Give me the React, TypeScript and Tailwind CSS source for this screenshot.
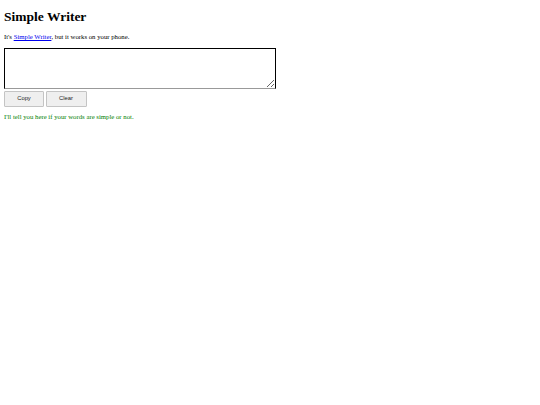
export default function App() {
  return (
    <div className="min-h-[405px] bg-white px-[4px] pt-[1px] font-['Liberation_Serif',serif] text-black">
      <h1 className="mt-[8px] mb-[8.5px] text-[13.5px] leading-[15.5px] font-bold">Simple Writer</h1>
      <p className="text-[6.75px] leading-[8px]">
        It's{" "}
        <a href="#" className="text-[#0000ee] underline">
          Simple Writer
        </a>
        , but it works on your phone.
      </p>
      <div className="mt-[7px] flex flex-col">
        <textarea className="h-[41px] w-[272px] resize border-[1px] border-t-black border-l-black border-r-black border-b-[#999] bg-white" />
        <div className="mt-[1.5px] flex gap-[1.5px]">
          <button className="h-[16px] w-[40px] rounded-[1px] border border-[#c4c4c4] bg-[#efefef] font-['Liberation_Sans',sans-serif] text-[5.8px] text-[#222]">
            Copy
          </button>
          <button className="h-[16px] w-[41px] rounded-[1px] border border-[#c4c4c4] bg-[#efefef] font-['Liberation_Sans',sans-serif] text-[5.8px] text-[#222]">
            Clear
          </button>
        </div>
      </div>
      <p className="mt-[6px] text-[6.75px] leading-[8px] text-[#008000]">
        I'll tell you here if your words are simple or not.
      </p>
    </div>
  )
}
